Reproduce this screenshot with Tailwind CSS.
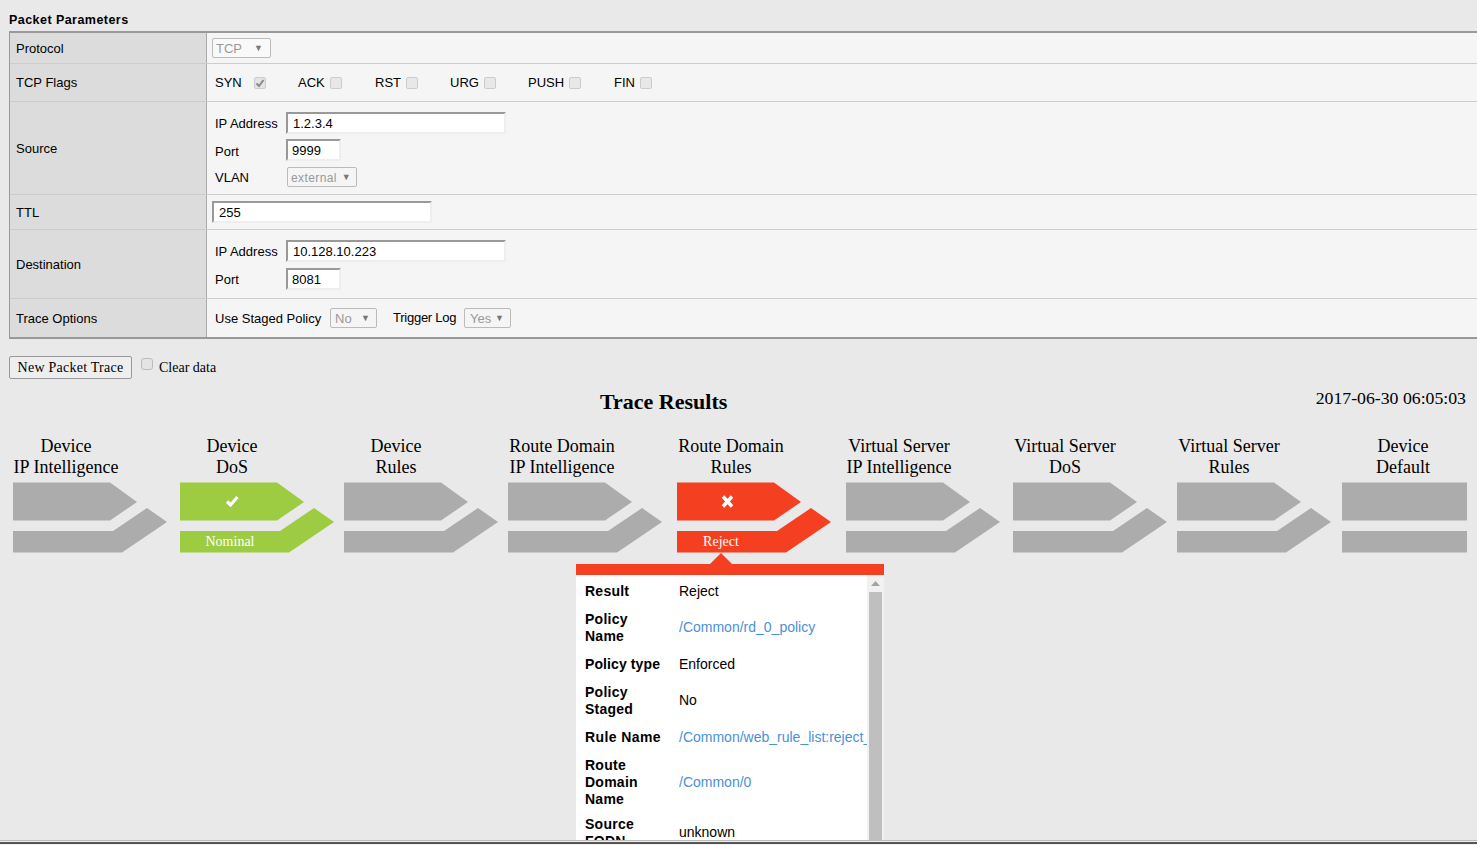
<!DOCTYPE html>
<html lang="en">
<head>
    <meta charset="UTF-8">
    <meta name="viewport" content="width=device-width, initial-scale=1.0">
    <title>Packet Tracer</title>
    <script src="https://cdn.jsdelivr.net/npm/@tailwindcss/browser@4"></script>
</head>
<body class="bg-[#e9e9e9] text-black h-screen overflow-hidden flex flex-col font-['Liberation_Sans',sans-serif] text-[13px]">
    <main class="flex-1 min-h-0 overflow-hidden pl-[9px]">
        <h2 class="font-bold text-[12.5px] leading-[15px] pt-[13px] pb-[3px] tracking-[0.45px]">Packet Parameters</h2>

        <!-- parameters table -->
        <div class="border-t-2 border-b-2 border-l border-[#999]">
            <div class="flex h-[31px] border-b border-[#ccc]">
                <div class="w-[197px] shrink-0 bg-[#dcdcdc] border-r border-[#aaa] px-[6px] pt-[2px] flex items-center">Protocol</div>
                <div class="flex-1 bg-[#f5f5f5] pl-[5px] flex items-center">
                    <div class="w-[59px] h-[20px] border border-[#bbb] rounded-[2px] bg-white/40 text-[#999] pl-[3px] pr-[7px] pt-[1px] flex items-center justify-between">TCP <span class="text-[9px] text-[#777]">▼</span></div>
                </div>
            </div>
            <div class="flex h-[38px] border-b border-[#ccc]">
                <div class="w-[197px] shrink-0 bg-[#dcdcdc] border-r border-[#aaa] px-[6px] flex items-center">TCP Flags</div>
                <div class="flex-1 bg-[#f5f5f5] pl-[8px] flex items-center">
                    <div class="w-[83px] flex items-center gap-[12px]">SYN
                        <span class="w-[12px] h-[12px] border border-[#ccc] rounded-[2px] bg-[#e4e4e4] flex items-center justify-center">
                            <svg width="10" height="10" viewBox="0 0 10 10"><path d="M1.5 5.5 L4 8 L8.5 2" fill="none" stroke="#888" stroke-width="2"/></svg>
                        </span>
                    </div>
                    <div class="w-[77px] flex items-center gap-[5px]">ACK <span class="w-[12px] h-[12px] border border-[#ccc] rounded-[2px] bg-[#e8e8e8]"></span></div>
                    <div class="w-[75px] flex items-center gap-[5px]">RST <span class="w-[12px] h-[12px] border border-[#ccc] rounded-[2px] bg-[#e8e8e8]"></span></div>
                    <div class="w-[78px] flex items-center gap-[5px]">URG <span class="w-[12px] h-[12px] border border-[#ccc] rounded-[2px] bg-[#e8e8e8]"></span></div>
                    <div class="w-[86px] flex items-center gap-[5px]">PUSH <span class="w-[12px] h-[12px] border border-[#ccc] rounded-[2px] bg-[#e8e8e8]"></span></div>
                    <div class="flex items-center gap-[5px]">FIN <span class="w-[12px] h-[12px] border border-[#ccc] rounded-[2px] bg-[#e8e8e8]"></span></div>
                </div>
            </div>
            <div class="flex h-[93px] border-b border-[#ccc]">
                <div class="w-[197px] shrink-0 bg-[#dcdcdc] border-r border-[#aaa] px-[6px] pt-[2px] flex items-center">Source</div>
                <div class="flex-1 bg-[#f5f5f5] pl-[8px] pt-[10px] flex flex-col gap-[5px]">
                    <div class="flex items-center">
                        <span class="w-[71px] translate-y-[1px]">IP Address</span>
                        <input value="1.2.3.4" class="w-[220px] h-[22px] bg-white border-2 border-t-[#999] border-l-[#999] border-r-[#eee] border-b-[#eee] px-[5px] outline-none">
                    </div>
                    <div class="flex items-center">
                        <span class="w-[71px] translate-y-[2px]">Port</span>
                        <input value="9999" class="w-[55px] h-[22px] bg-white border-2 border-t-[#999] border-l-[#999] border-r-[#eee] border-b-[#eee] px-[4px] outline-none">
                    </div>
                    <div class="flex items-center mt-[1px] h-[20px]">
                        <span class="w-[72px] translate-y-[1px]">VLAN</span>
                        <div class="w-[70px] h-[20px] border border-[#bbb] rounded-[2px] text-[#999] pl-[3px] pr-[5px] pt-[1px] flex items-center justify-between text-[12px] tracking-[0.4px]">external <span class="text-[9px] text-[#777]">▼</span></div>
                    </div>
                </div>
            </div>
            <div class="flex h-[35px] border-b border-[#ccc]">
                <div class="w-[197px] shrink-0 bg-[#dcdcdc] border-r border-[#aaa] px-[6px] pt-[2px] flex items-center">TTL</div>
                <div class="flex-1 bg-[#f5f5f5] pl-[5px] flex items-center">
                    <input value="255" class="w-[220px] h-[22px] bg-white border-2 border-t-[#999] border-l-[#999] border-r-[#eee] border-b-[#eee] px-[5px] outline-none">
                </div>
            </div>
            <div class="flex h-[69px] border-b border-[#ccc]">
                <div class="w-[197px] shrink-0 bg-[#dcdcdc] border-r border-[#aaa] px-[6px] pt-[2px] flex items-center">Destination</div>
                <div class="flex-1 bg-[#f5f5f5] pl-[8px] pt-[10px] flex flex-col gap-[6px]">
                    <div class="flex items-center">
                        <span class="w-[71px] translate-y-[1px]">IP Address</span>
                        <input value="10.128.10.223" class="w-[220px] h-[22px] bg-white border-2 border-t-[#999] border-l-[#999] border-r-[#eee] border-b-[#eee] px-[5px] outline-none">
                    </div>
                    <div class="flex items-center">
                        <span class="w-[71px] translate-y-[1px]">Port</span>
                        <input value="8081" class="w-[55px] h-[22px] bg-white border-2 border-t-[#999] border-l-[#999] border-r-[#eee] border-b-[#eee] px-[4px] outline-none">
                    </div>
                </div>
            </div>
            <div class="flex h-[38px]">
                <div class="w-[197px] shrink-0 bg-[#dcdcdc] border-r border-[#aaa] px-[6px] pt-[2px] flex items-center">Trace Options</div>
                <div class="flex-1 bg-[#f5f5f5] pl-[8px] flex items-center">
                    <span class="w-[115px] translate-y-[1px]">Use Staged Policy</span>
                    <div class="w-[47px] h-[20px] border border-[#bbb] rounded-[2px] text-[#999] pl-[4px] pr-[6px] pt-[1px] flex items-center justify-between">No <span class="text-[9px] text-[#777]">▼</span></div>
                    <span class="w-[71px] ml-[16px] tracking-[-0.25px]">Trigger Log</span>
                    <div class="w-[47px] h-[20px] border border-[#bbb] rounded-[2px] text-[#999] pl-[5px] pr-[6px] pt-[1px] flex items-center justify-between">Yes <span class="text-[9px] text-[#777]">▼</span></div>
                </div>
            </div>
        </div>

        <!-- trace controls -->
        <div class="flex items-start mt-[17px] font-['Liberation_Serif',serif] text-[14px]">
            <button class="w-[123px] h-[23px] border border-[#999] rounded-[2px] bg-[#eeeeee] tracking-[0.25px]">New Packet Trace</button>
            <span class="ml-[9px] w-[12px] h-[12px] mt-[2px] border border-[#bbb] rounded-[3px] bg-[#e4e4e4]"></span>
            <span class="ml-[6px] mt-[3px] leading-[17px]">Clear data</span>
        </div>

        <div class="flex justify-between items-start font-['Liberation_Serif',serif] pl-[591px] pr-[11px] mt-[8px] h-[49px]">
            <h1 class="font-bold text-[22px] leading-[28px] mt-[1px]">Trace Results</h1>
            <span class="text-[17.75px] leading-[22px]">2017-06-30 06:05:03</span>
        </div>

        <!-- trace stages -->
        <div class="grid grid-cols-[167px_164px_164px_169px_169px_167px_164px_165px_125px] pl-[4px] font-['Liberation_Serif',serif] text-[18px] leading-[21px]">
            <div>
                <div class="w-[106px] text-center whitespace-nowrap mb-[4px]">Device<br>IP Intelligence</div>
                <svg width="154" height="71" viewBox="0 0 154 71" class="block"><path d="M0 .5H97L124 20 97 38.5H0Z" fill="#acacac"/><path d="M0 49H100L134 26 154 40 109 70.5H0Z" fill="#acacac"/></svg>
            </div>
            <div>
                <div class="w-[104px] text-center whitespace-nowrap mb-[4px]">Device<br>DoS</div>
                <svg width="154" height="71" viewBox="0 0 154 71" class="block">
                    <path d="M0 .5H97L124 20 97 38.5H0Z" fill="#9dcb42"/><path d="M0 49H100L134 26 154 40 109 70.5H0Z" fill="#9dcb42"/>
                    <path d="M47 19.5L50.5 23 57.5 15" fill="none" stroke="#fff" stroke-width="3.2"/>
                    <text x="50" y="64" text-anchor="middle" fill="#fff" font-size="14">Nominal</text>
                </svg>
            </div>
            <div>
                <div class="w-[104px] text-center whitespace-nowrap mb-[4px]">Device<br>Rules</div>
                <svg width="154" height="71" viewBox="0 0 154 71" class="block"><path d="M0 .5H97L124 20 97 38.5H0Z" fill="#acacac"/><path d="M0 49H100L134 26 154 40 109 70.5H0Z" fill="#acacac"/></svg>
            </div>
            <div>
                <div class="w-[108px] text-center whitespace-nowrap mb-[4px]">Route Domain<br>IP Intelligence</div>
                <svg width="154" height="71" viewBox="0 0 154 71" class="block"><path d="M0 .5H97L124 20 97 38.5H0Z" fill="#acacac"/><path d="M0 49H100L134 26 154 40 109 70.5H0Z" fill="#acacac"/></svg>
            </div>
            <div class="relative">
                <div class="w-[108px] text-center whitespace-nowrap mb-[4px]">Route Domain<br>Rules</div>
                <svg width="154" height="71" viewBox="0 0 154 71" class="block">
                    <path d="M0 .5H97L124 20 97 38.5H0Z" fill="#f44021"/><path d="M0 49H100L134 26 154 40 109 70.5H0Z" fill="#f44021"/>
                    <path d="M46 14.5L55 24.5M55 14.5L46 24.5" fill="none" stroke="#fff" stroke-width="3.4"/>
                    <text x="44" y="64" text-anchor="middle" fill="#fff" font-size="14">Reject</text>
                </svg>

                <!-- result popup -->
                <div class="absolute left-[-101px] top-[117px] w-[308px] font-['Liberation_Sans',sans-serif] text-[14px] leading-[17px]">
                    <svg width="22" height="11" viewBox="0 0 22 11" class="block ml-[134px]"><path d="M0 11L11 0 22 11Z" fill="#f44021"/></svg>
                    <div class="h-[11px] bg-[#f44021]"></div>
                    <div class="flex h-[300px] bg-white">
                        <div class="w-[291px] overflow-hidden pl-[9px] pt-[8px] flex flex-col gap-[11px]">
                            <div class="flex items-center"><span class="w-[94px] shrink-0 font-bold tracking-[0.25px]">Result</span><span class="whitespace-nowrap">Reject</span></div>
                            <div class="flex items-center"><span class="w-[94px] shrink-0 font-bold tracking-[0.25px]">Policy<br>Name</span><a class="whitespace-nowrap text-[#4a90d9] mb-[2px]">/Common/rd_0_policy</a></div>
                            <div class="flex items-center"><span class="w-[94px] shrink-0 font-bold tracking-[0.1px] whitespace-nowrap">Policy type</span><span class="whitespace-nowrap">Enforced</span></div>
                            <div class="flex items-center"><span class="w-[94px] shrink-0 font-bold tracking-[0.25px]">Policy<br>Staged</span><span class="whitespace-nowrap mb-[2px]">No</span></div>
                            <div class="flex items-center"><span class="w-[94px] shrink-0 font-bold tracking-[0.4px] whitespace-nowrap">Rule Name</span><a class="whitespace-nowrap text-[#4a90d9]">/Common/web_rule_list:reject_all</a></div>
                            <div class="flex items-center"><span class="w-[94px] shrink-0 font-bold tracking-[0.25px]">Route<br>Domain<br>Name</span><a class="whitespace-nowrap text-[#4a90d9]">/Common/0</a></div>
                            <div class="flex items-center mt-[-3px]"><span class="w-[94px] shrink-0 font-bold tracking-[0.25px]">Source<br>FQDN</span><span class="whitespace-nowrap mb-[2px]">unknown</span></div>
                        </div>
                        <div class="w-[17px] bg-[#f1f1f1] flex flex-col items-center pt-[6px]">
                            <svg width="9" height="5" viewBox="0 0 9 5" class="block"><path d="M0 5L4.5 0 9 5Z" fill="#a3a3a3"/></svg>
                            <div class="w-[13px] flex-1 mt-[6px] bg-[#bfbfbf]"></div>
                        </div>
                    </div>
                </div>
            </div>
            <div>
                <div class="w-[106px] text-center whitespace-nowrap mb-[4px]">Virtual Server<br>IP Intelligence</div>
                <svg width="154" height="71" viewBox="0 0 154 71" class="block"><path d="M0 .5H97L124 20 97 38.5H0Z" fill="#acacac"/><path d="M0 49H100L134 26 154 40 109 70.5H0Z" fill="#acacac"/></svg>
            </div>
            <div>
                <div class="w-[104px] text-center whitespace-nowrap mb-[4px]">Virtual Server<br>DoS</div>
                <svg width="154" height="71" viewBox="0 0 154 71" class="block"><path d="M0 .5H97L124 20 97 38.5H0Z" fill="#acacac"/><path d="M0 49H100L134 26 154 40 109 70.5H0Z" fill="#acacac"/></svg>
            </div>
            <div>
                <div class="w-[104px] text-center whitespace-nowrap mb-[4px]">Virtual Server<br>Rules</div>
                <svg width="154" height="71" viewBox="0 0 154 71" class="block"><path d="M0 .5H97L124 20 97 38.5H0Z" fill="#acacac"/><path d="M0 49H100L134 26 154 40 109 70.5H0Z" fill="#acacac"/></svg>
            </div>
            <div>
                <div class="w-[122px] text-center whitespace-nowrap mb-[4px]">Device<br>Default</div>
                <svg width="125" height="71" viewBox="0 0 125 71" class="block"><path d="M0 .5H125V38.5H0Z" fill="#acacac"/><path d="M0 49H125V70.5H0Z" fill="#acacac"/></svg>
            </div>
        </div>
    </main>
    <footer class="h-[5px] shrink-0 bg-[#f3f3f3] border-t border-[#bbb]">
        <div class="h-[2px] mt-[1px] bg-[#555]"></div>
    </footer>
</body>
</html>
